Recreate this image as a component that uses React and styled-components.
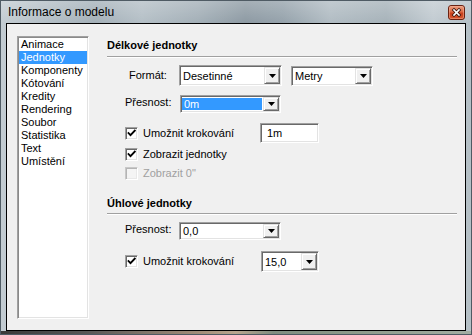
import React from "react";
import styled, { createGlobalStyle } from "styled-components";

const Global = createGlobalStyle`
  html, body { margin: 0; padding: 0; background: #ffffff; }
  body { font-family: "Liberation Sans", Arial, sans-serif; font-size: 11px; color: #000; }
  * { box-sizing: border-box; }
`;

const Window = styled.div`
  width: 472px;
  height: 335px;
  border: 1px solid #4f5b64;
  display: flex;
  flex-direction: column;
  background:
    linear-gradient(180deg, rgba(255,255,255,0.22) 0px, rgba(255,255,255,0) 22px),
    linear-gradient(90deg, #c3ccd2 0%, #b3bec5 10%, #a4b0b8 20%, #b4bfc6 30%, #a3afb7 42%, #8d9aa3 52%, #95a2ab 60%, #b1bcc3 70%, #a6b2b9 82%, #c2cbd1 92%, #b4bfc5 100%);
`;

const TitleBar = styled.div`
  height: 22px;
  display: flex;
  justify-content: space-between;
  align-items: flex-start;
  padding: 0 6px 0 7px;
`;

const Title = styled.div`
  font-size: 12px;
  line-height: 22px;
  color: #000;
`;

const CloseButton = styled.div`
  margin-top: 4px;
  width: 17px;
  height: 15px;
  flex: none;
  display: flex;
`;

const Frame = styled.div`
  flex: 1;
  display: flex;
  padding: 0 5px;
`;

const Client = styled.div`
  flex: 1;
  border: 1px solid #000;
  background: #f0f0f0;
  display: flex;
  align-items: flex-start;
  gap: 18px;
  padding: 12px 0 0 10px;
`;

const BottomEdge = styled.div`
  height: 3px;
  background: linear-gradient(90deg, #3a3a3a 0%, #565656 18%, #7d7268 30%, #a18c78 42%, #b8a58e 50%, #7f8c80 58%, #8c9a8a 75%, #a3ada2 100%);
`;

const ListBox = styled.div`
  width: 72px;
  height: 283px;
  background: #fff;
  border: 1px solid;
  border-color: #a0a0a0 #ffffff #ffffff #a0a0a0;
  box-shadow: inset 1px 1px 0 #8a8a8a, inset -1px -1px 0 #e3e3e3;
  padding: 1px;
`;

const ListItem = styled.div`
  height: 13px;
  line-height: 13px;
  padding-left: 2px;
  white-space: nowrap;
  background: ${(p) => (p.$active ? "#3399ff" : "transparent")};
  color: ${(p) => (p.$active ? "#fff" : "#000")};
`;

const Panel = styled.div`
  width: 350px;
  display: flex;
  flex-direction: column;
`;

const Heading = styled.div`
  font-weight: bold;
  line-height: 13px;
  margin-top: ${(p) => p.$mt}px;
`;

const Rule = styled.div`
  margin-top: ${(p) => p.$mt}px;
  height: 0;
  border-top: 1px solid #a0a0a0;
  border-bottom: 1px solid #ffffff;
`;

const Section = styled.div`
  padding-left: 18px;
  display: flex;
  flex-direction: column;
`;

const Row = styled.div`
  display: flex;
  align-items: center;
  margin-top: ${(p) => p.$mt}px;
  height: ${(p) => p.$h}px;
`;

const Label = styled.div`
  width: ${(p) => p.$w}px;
  padding-left: ${(p) => p.$pl || 0}px;
  padding-bottom: ${(p) => p.$pb || 0}px;
  line-height: 13px;
  flex: none;
`;

const Combo = styled.div`
  width: ${(p) => p.$w}px;
  height: ${(p) => p.$h}px;
  margin-left: ${(p) => p.$ml || 0}px;
  flex: none;
  background: #fff;
  border: 1px solid;
  border-color: #a0a0a0 #ffffff #ffffff #a0a0a0;
  box-shadow: inset 1px 1px 0 #696969, inset -1px -1px 0 #e3e3e3;
  padding: 1px;
  display: flex;
`;

const ComboText = styled.div`
  flex: 1;
  display: flex;
  align-items: center;
  padding-left: 2px;
  margin: ${(p) => (p.$selected ? "1px 1px 1px 0" : "0")};
  background: ${(p) => (p.$selected ? "#3399ff" : "transparent")};
  color: ${(p) => (p.$selected ? "#fff" : "#000")};
  white-space: nowrap;
`;

const ComboButton = styled.div`
  width: 16px;
  flex: none;
  background: #f0f0f0;
  border: 1px solid;
  border-color: #e3e3e3 #696969 #696969 #e3e3e3;
  box-shadow: inset 1px 1px 0 #ffffff, inset -1px -1px 0 #a0a0a0;
  display: flex;
  align-items: center;
  justify-content: center;
`;

const TextBox = styled.div`
  width: ${(p) => p.$w}px;
  height: 20px;
  flex: none;
  background: #fff;
  border: 1px solid;
  border-color: #a0a0a0 #ffffff #ffffff #a0a0a0;
  box-shadow: inset 1px 1px 0 #696969, inset -1px -1px 0 #e3e3e3;
  padding-left: 6px;
  display: flex;
  align-items: center;
`;

const CheckCell = styled.div`
  width: ${(p) => p.$w || 135}px;
  display: flex;
  align-items: center;
  flex: none;
`;

const CheckBox = styled.div`
  width: 13px;
  height: 13px;
  flex: none;
  background: ${(p) => (p.$disabled ? "#f4f4f4" : "#fff")};
  border: 1px solid;
  border-color: ${(p) => (p.$disabled ? "#c8c8c8 #ffffff #ffffff #c8c8c8" : "#a0a0a0 #ffffff #ffffff #a0a0a0")};
  box-shadow: ${(p) =>
    p.$disabled
      ? "inset 1px 1px 0 #b4b4b4, inset -1px -1px 0 #e8e8e8"
      : "inset 1px 1px 0 #696969, inset -1px -1px 0 #e3e3e3"};
  display: flex;
  align-items: center;
  justify-content: center;
`;

const CheckText = styled.span`
  margin-left: 5px;
  line-height: 13px;
  white-space: nowrap;
  color: ${(p) => (p.$disabled ? "#a0a0a0" : "#000")};
`;

const Arrow = () => (
  <svg width="7" height="4" viewBox="0 0 7 4">
    <polygon points="0,0 7,0 3.5,4" fill="#000" />
  </svg>
);

const Tick = () => (
  <svg width="9" height="9" viewBox="0 0 9 9">
    <path d="M1.5 4 L3.5 6.2 L7.8 1.6" stroke="#000" strokeWidth="1.8" fill="none" strokeLinecap="square" />
  </svg>
);

const CloseIcon = () => (
  <svg width="17" height="15" viewBox="0 0 17 15">
    <defs>
      <linearGradient id="closeGrad" x1="0" y1="0" x2="0" y2="1">
        <stop offset="0" stopColor="#eea184" />
        <stop offset="0.45" stopColor="#dd6a44" />
        <stop offset="0.55" stopColor="#c7401d" />
        <stop offset="1" stopColor="#d9582f" />
      </linearGradient>
    </defs>
    <rect x="0.5" y="0.5" width="16" height="14" rx="2.5" fill="url(#closeGrad)" stroke="#6a2212" />
    <rect x="1.5" y="1.5" width="14" height="12" rx="1.5" fill="none" stroke="#f4b49a" strokeOpacity="0.5" />
    <path d="M6 5 L11 10 M11 5 L6 10" stroke="#3c1810" strokeWidth="3.2" strokeLinecap="square" />
    <path d="M6 5 L11 10 M11 5 L6 10" stroke="#ffffff" strokeWidth="1.6" strokeLinecap="square" />
  </svg>
);

const Select = ({ w, h, ml, children, selected }) => (
  <Combo $w={w} $h={h} $ml={ml}>
    <ComboText $selected={selected}>{children}</ComboText>
    <ComboButton>
      <Arrow />
    </ComboButton>
  </Combo>
);

const Check = ({ checked, disabled, children, w }) => (
  <CheckCell $w={w}>
    <CheckBox $disabled={disabled}>{checked && <Tick />}</CheckBox>
    <CheckText $disabled={disabled}>{children}</CheckText>
  </CheckCell>
);

const items = ["Animace", "Jednotky", "Komponenty", "Kótování", "Kredity", "Rendering", "Soubor", "Statistika", "Text", "Umístění"];

export default function App() {
  return (
    <>
      <Global />
      <Window>
        <TitleBar>
          <Title>Informace o modelu</Title>
          <CloseButton>
            <CloseIcon />
          </CloseButton>
        </TitleBar>
        <Frame>
          <Client>
            <ListBox>
              {items.map((it) => (
                <ListItem key={it} $active={it === "Jednotky"}>
                  {it}
                </ListItem>
              ))}
            </ListBox>
            <Panel>
              <Heading $mt={3}>Délkové jednotky</Heading>
              <Rule $mt={4} />
              <Section>
                <Row $mt={7} $h={21}>
                  <Label $w={54} $pl={4}>Formát:</Label>
                  <Select w={103} h={21}>Desetinné</Select>
                  <Select w={82} h={20} ml={9}>Metry</Select>
                </Row>
                <Row $mt={9} $h={18}>
                  <Label $w={55} $pb={3}>Přesnost:</Label>
                  <Select w={101} h={18} selected>0m</Select>
                </Row>
                <Row $mt={10} $h={20}>
                  <Check checked>Umožnit krokování</Check>
                  <TextBox $w={59}>1m</TextBox>
                </Row>
                <Row $mt={5} $h={13}>
                  <Check checked>Zobrazit jednotky</Check>
                </Row>
                <Row $mt={6} $h={13}>
                  <Check disabled>Zobrazit 0"</Check>
                </Row>
              </Section>
              <Heading $mt={17}>Úhlové jednotky</Heading>
              <Rule $mt={3} />
              <Section>
                <Row $mt={7} $h={18}>
                  <Label $w={54} $pb={3}>Přesnost:</Label>
                  <Select w={102} h={18}>0,0</Select>
                </Row>
                <Row $mt={11} $h={21}>
                  <Check checked w={136}>Umožnit krokování</Check>
                  <Select w={58} h={21}>15,0</Select>
                </Row>
              </Section>
            </Panel>
          </Client>
        </Frame>
        <BottomEdge />
      </Window>
    </>
  );
}
